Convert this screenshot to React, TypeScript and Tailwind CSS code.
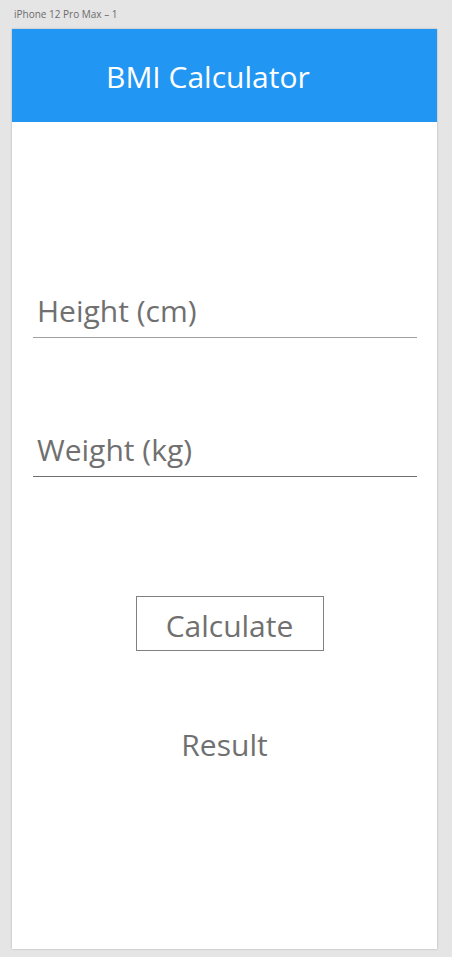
import React from "react";

export default function App() {
  const font = { fontFamily: '"Open Sans", "Noto Sans", sans-serif' };
  return (
    <div className="w-[452px] h-[957px] bg-[#e5e5e5] pt-[6px] pl-[14px]" style={font}>
      <div className="text-[10px] leading-[16px] text-[#6b6b6b] h-[23px]">iPhone 12 Pro Max – 1</div>
      <div className="-ml-[2px] w-[425px] h-[920px] bg-white shadow-[0_0_2px_rgba(0,0,0,0.25)] flex flex-col">
        <div className="h-[93px] bg-[#2196f3] flex items-center pl-[94px] pt-[2px]">
          <span className="text-white text-[30px] leading-none">BMI Calculator</span>
        </div>
        <div className="pl-[21px] pr-[20px] pt-[170px]">
          <div className="border-b border-[#a0a0a0] pl-[4px] pb-[7px]">
            <span className="text-[30px] leading-[38px] text-[#707070]">Height (cm)</span>
          </div>
          <div className="border-b border-[#707070] pl-[4px] pb-[7px] mt-[93px]">
            <span className="text-[30px] leading-[38px] text-[#707070]">Weight (kg)</span>
          </div>
        </div>
        <div className="flex justify-center mt-[119px] pl-[10px]">
          <div className="w-[188px] h-[55px] border border-[#808080] flex items-center justify-center pt-[4px]">
            <span className="text-[30px] leading-none text-[#707070]">Calculate</span>
          </div>
        </div>
        <div className="flex justify-center mt-[75px]">
          <span className="text-[30px] leading-[38px] text-[#707070]">Result</span>
        </div>
      </div>
    </div>
  );
}
